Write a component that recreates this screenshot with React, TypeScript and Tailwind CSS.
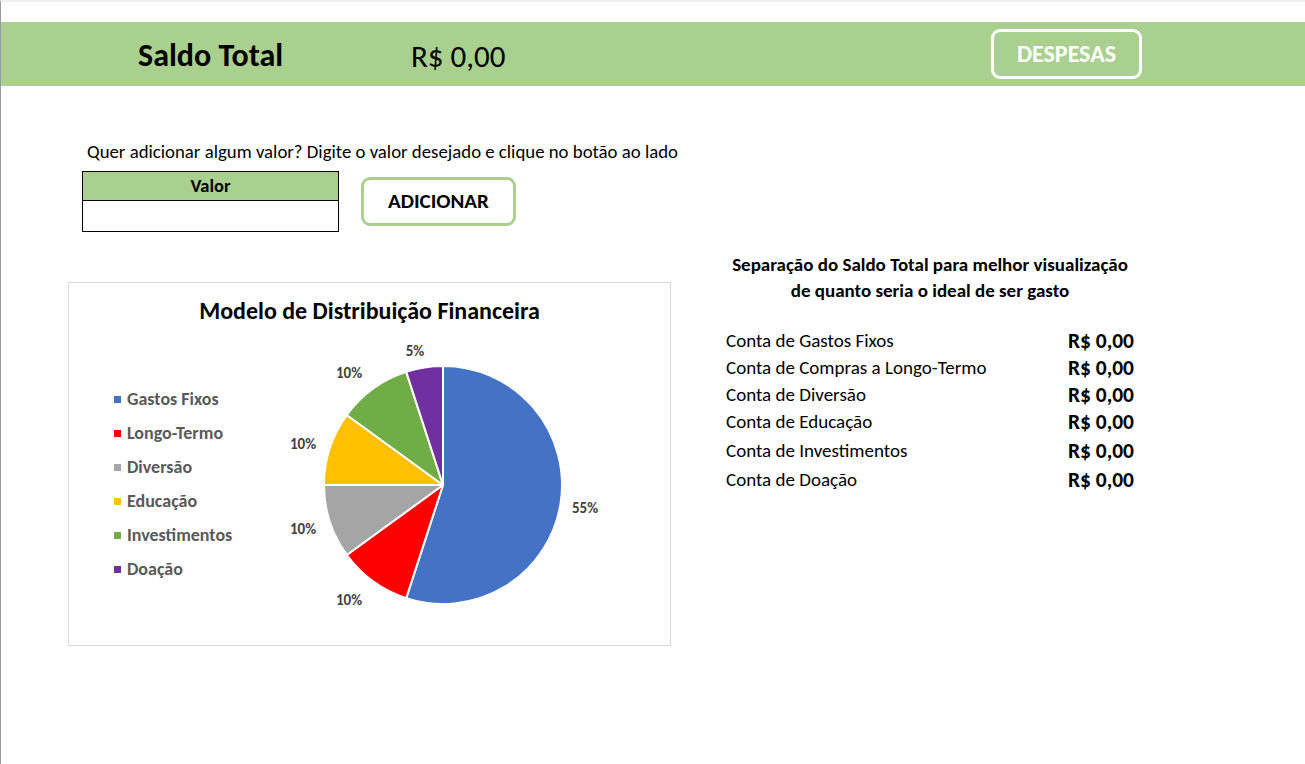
import React from 'react';

const font = { fontFamily: 'Carlito, Lato, "Open Sans", sans-serif' };

const legend = [
  { name: 'Gastos Fixos', color: 'bg-[#4472c4]' },
  { name: 'Longo-Termo', color: 'bg-[#ff0000]' },
  { name: 'Diversão', color: 'bg-[#a5a5a5]' },
  { name: 'Educação', color: 'bg-[#ffc000]' },
  { name: 'Investimentos', color: 'bg-[#70ad47]' },
  { name: 'Doação', color: 'bg-[#7030a0]' },
];

const contas = [
  'Conta de Gastos Fixos',
  'Conta de Compras a Longo-Termo',
  'Conta de Diversão',
  'Conta de Educação',
  'Conta de Investimentos',
  'Conta de Doação',
];

// pie slices, center (174,146) r=119, clockwise from top
const slices = [
  { d: 'M174 146 L174 27 A119 119 0 1 1 137.23 259.18 Z', fill: '#4472c4' },
  { d: 'M174 146 L137.23 259.18 A119 119 0 0 1 77.73 215.95 Z', fill: '#ff0000' },
  { d: 'M174 146 L77.73 215.95 A119 119 0 0 1 55 146 Z', fill: '#a5a5a5' },
  { d: 'M174 146 L55 146 A119 119 0 0 1 77.73 76.05 Z', fill: '#ffc000' },
  { d: 'M174 146 L77.73 76.05 A119 119 0 0 1 137.23 32.82 Z', fill: '#70ad47' },
  { d: 'M174 146 L137.23 32.82 A119 119 0 0 1 174 27 Z', fill: '#7030a0' },
];

const labels = [
  { t: '55%', x: 316, y: 169 },
  { t: '10%', x: 80, y: 261 },
  { t: '10%', x: 34, y: 190 },
  { t: '10%', x: 34, y: 105 },
  { t: '10%', x: 80, y: 34 },
  { t: '5%', x: 146, y: 12 },
];

export default function App() {
  return (
    <div className="min-h-screen w-full bg-white border-l border-[#9a9a9a] border-t-2 border-t-[#f0f0f0] text-black" style={font}>
      {/* Header */}
      <div className="mt-[20px] h-[64px] bg-[#a9d08e] flex items-center">
        <div className="ml-[137px] w-[273px] text-[32px] font-bold leading-none translate-y-[2px]">Saldo Total</div>
        <div className="text-[31px] leading-none translate-y-[2px]">R$ 0,00</div>
        <button className="ml-auto mr-[163px] w-[151px] h-[50px] border-[3px] border-white rounded-[9px] text-white text-[24px] font-bold leading-none">
          DESPESAS
        </button>
      </div>

      <div className="flex">
        {/* Left column */}
        <div className="pl-[67px] w-[670px] shrink-0">
          <p className="mt-[56px] ml-[19px] text-[18.8px] leading-[20px] whitespace-nowrap">
            Quer adicionar algum valor? Digite o valor desejado e clique no botão ao lado
          </p>
          <div className="mt-[9px] ml-[14px] flex items-start">
            <div className="w-[257px] border border-black">
              <div className="h-[29px] bg-[#a9d08e] border-b border-black flex items-center justify-center text-[18.5px] font-bold">
                Valor
              </div>
              <div className="h-[30px]" />
            </div>
            <button className="ml-[22px] mt-[6px] w-[155px] h-[49px] border-[3px] border-[#a9d08e] rounded-[9px] text-[21px] font-bold leading-none">
              ADICIONAR
            </button>
          </div>

          {/* Chart */}
          <div className="mt-[50px] w-[603px] h-[364px] border border-[#d9d9d9]">
            <div className="pt-[14px] text-center text-[24px] font-bold leading-[28px]">
              Modelo de Distribuição Financeira
            </div>
            <div className="mt-[16px] flex">
              <div className="ml-[45px] w-[157px] pt-[41px] flex flex-col">
                {legend.map((l) => (
                  <div key={l.name} className="h-[34px] flex items-center gap-[6px]">
                    <span className={`w-[7px] h-[7px] shrink-0 ${l.color}`} />
                    <span className="text-[18px] font-bold text-[#595959] leading-none whitespace-nowrap">{l.name}</span>
                  </div>
                ))}
              </div>
              <svg width="350" height="280" viewBox="0 0 350 280" className="-ml-[2px] -mt-[2px]">
                {slices.map((s, i) => (
                  <path key={i} d={s.d} fill={s.fill} stroke="#ffffff" strokeWidth="2" strokeLinejoin="round" />
                ))}
                {labels.map((l, i) => (
                  <text
                    key={i}
                    x={l.x}
                    y={l.y}
                    textAnchor="middle"
                    dominantBaseline="central"
                    fontSize="15"
                    fontWeight="bold"
                    fill="#404040"
                    style={font}
                  >
                    {l.t}
                  </text>
                ))}
              </svg>
            </div>
          </div>
        </div>

        {/* Right column */}
        <div className="ml-[55px] w-[408px] pt-[166px]">
          <div className="text-center text-[19px] font-bold leading-[26px] whitespace-nowrap">
            Separação do Saldo Total para melhor visualização
            <br />
            de quanto seria o ideal de ser gasto
          </div>
          <div className="mt-[24px] flex flex-col">
            {contas.map((c, i) => (
              <div key={c} className={`h-[27px] flex items-center justify-between ${i >= 4 ? 'mt-[2px]' : ''}`}>
                <span className="text-[19px] whitespace-nowrap">{c}</span>
                <span className="text-[21.5px] font-bold whitespace-nowrap">R$ 0,00</span>
              </div>
            ))}
          </div>
        </div>
      </div>
    </div>
  );
}
